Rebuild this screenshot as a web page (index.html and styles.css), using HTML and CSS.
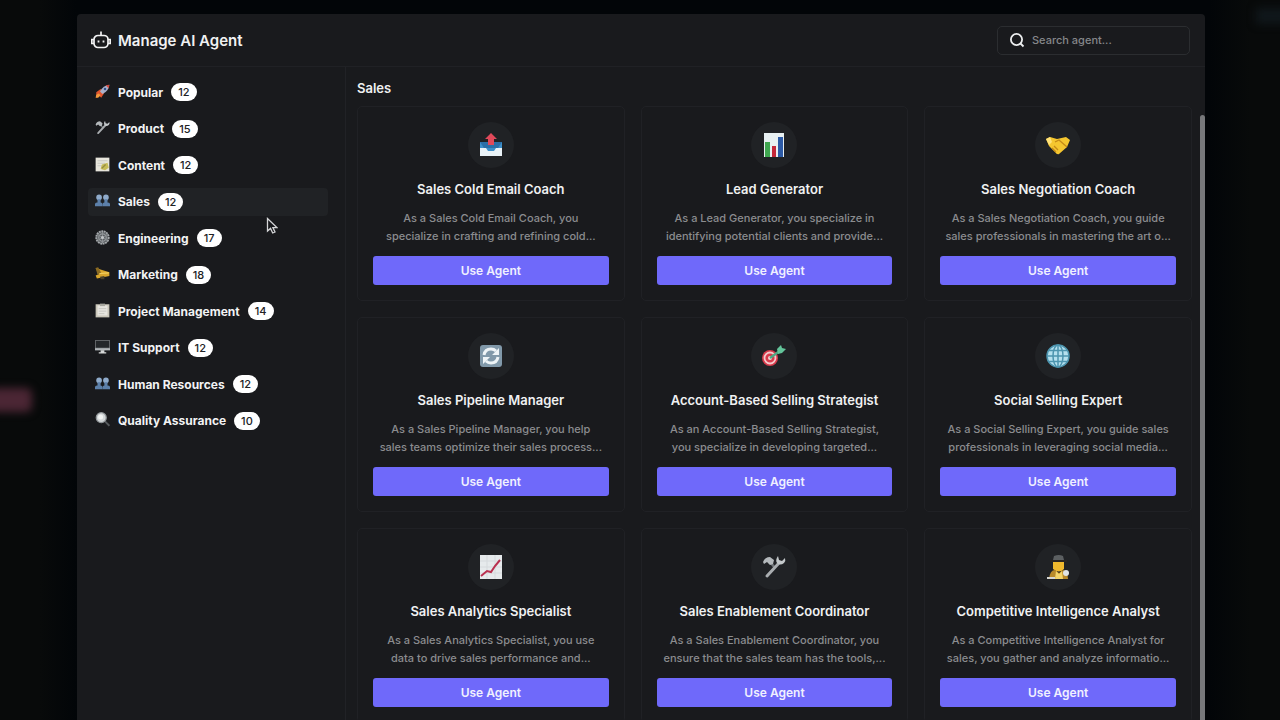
FILE: index.html
```html
<!DOCTYPE html>
<html lang="en">
<head>
  <meta charset="utf-8">
  <meta name="viewport" content="width=device-width, initial-scale=1">
  <title>Manage AI Agent</title>
  <link rel="stylesheet" href="styles.css">
</head>
<body>
  <div class="glow glow-pink"></div>
  <div class="glow glow-blue"></div>

  <!-- shared icons -->
  <svg class="sprite" aria-hidden="true">
    <symbol id="tools" viewBox="0 0 24 24">
      <path d="M9 8l4 5" stroke="#6d7276" stroke-width="2.5"/>
      <path d="M5 21 L17 8" stroke="#a9adb0" stroke-width="3" stroke-linecap="round"/>
      <path d="M16 1 q-3 4-1 7 q3 3 7 0 q2-2 1-5 l-3 3 l-3-1 z" fill="#c3c8ca"/>
      <path d="M1 7 q2-5 7-5 l4 3 l-1 4 l-3 1 l-3-3 l-3 2 z" fill="#b4b9bc"/>
    </symbol>
    <symbol id="people" viewBox="0 0 24 24">
      <circle cx="6.5" cy="7" r="4.5" fill="#8fabcb"/>
      <circle cx="17.5" cy="7" r="4.5" fill="#8fabcb"/>
      <path d="M4 10h5v5q3 0 3 3v3H0v-4q1-2 4-2z" fill="#5c80aa"/>
      <path d="M15 10h5v5q3 0 4 2v4H12v-3q0-3 3-3z" fill="#5c80aa"/>
    </symbol>
  </svg>

  <div class="modal">
    <header class="header">
      <h1 class="title">
        <svg class="bot" viewBox="0 0 20 20" fill="none" stroke="#f2f3f4" stroke-width="1.7">
          <rect x="3" y="5.5" width="14" height="12" rx="4"/>
          <path d="M10 5.5V1.5M3 9.5H.8v4H3M17 9.5h2.2v4H17"/>
          <path d="M6.6 11.5h1.8M11.6 11.5h1.8" stroke-width="2"/>
        </svg>
        Manage AI Agent
      </h1>
      <label class="search">
        <svg viewBox="0 0 16 16" fill="none" stroke="#eceeef" stroke-width="1.8">
          <circle cx="7.5" cy="7.5" r="5.6"/>
          <path d="M11.5 11.5l3 3"/>
        </svg>
        <input type="text" placeholder="Search agent..." aria-label="Search agent">
      </label>
    </header>

    <div class="body">
      <nav class="sidebar">
        <div class="list">
          <a class="item" href="#">
            <svg viewBox="0 0 24 24">
              <path d="M2 13l7-5 6 6-5 8-3-3-5 3z" fill="#e0562f"/>
              <path d="M2 17l4-2 3 3-4 4H1z" fill="#f29a3c"/>
              <path d="M8 12Q13 2 23 1 22 11 12 16z" fill="#a9b0cb"/>
              <path d="M17 2l6-1-1 6z" fill="#cf4b3f"/>
              <circle cx="16" cy="8" r="2" fill="#31518c"/>
            </svg>
            Popular <span class="count">12</span>
          </a>
          <a class="item" href="#">
            <svg><use href="#tools"/></svg>
            Product <span class="count">15</span>
          </a>
          <a class="item" href="#">
            <svg viewBox="0 0 24 24">
              <path d="M1 1h22v22H1z" fill="#e7e5dc"/>
              <path d="M4 6h16M4 10h12M4 14h7" stroke="#c6c6c0" stroke-width="1.5"/>
              <path d="M9 19l2-7 9-3 2 8-6 4z" fill="#c6bc58"/>
              <path d="M11 18l6-6" stroke="#958b45" stroke-width="2"/>
            </svg>
            Content <span class="count">12</span>
          </a>
          <a class="item active" href="#">
            <svg><use href="#people"/></svg>
            Sales <span class="count">12</span>
          </a>
          <a class="item" href="#">
            <svg viewBox="0 0 24 24">
              <circle cx="12" cy="12" r="10" fill="#5a5e61" stroke="#a4a8ab" stroke-width="3" stroke-dasharray="3 1"/>
              <circle cx="12" cy="12" r="6" fill="none" stroke="#969a9d" stroke-width="2"/>
              <path d="M12 3v18M4 7l16 10M4 17L20 7" stroke="#8e9295" stroke-width="1.5"/>
              <circle cx="12" cy="12" r="2.5" fill="#c1c4c6"/>
            </svg>
            Engineering <span class="count">17</span>
          </a>
          <a class="item" href="#">
            <svg viewBox="0 0 24 24">
              <path d="M1 3l22 7v6L3 20l-2-5 5-2z" fill="#d9a62c"/>
              <path d="M1 3l4-1 5 9-6 3z" fill="#8a6a22"/>
              <path d="M7 12l15-1" stroke="#f3d262" stroke-width="2"/>
              <path d="M8 17l7-1v5H9z" fill="#4b412a"/>
            </svg>
            Marketing <span class="count">18</span>
          </a>
          <a class="item" href="#">
            <svg viewBox="0 0 24 24">
              <path d="M1 2h22v21H1z" fill="#c9c6b9"/>
              <path d="M4 4h16v16H4z" fill="#e6e5df"/>
              <path d="M8 1h8v4H8z" fill="#a7a79f"/>
              <path d="M6 9h12M6 13h12M6 17h9" stroke="#c6c6c0" stroke-width="1.5"/>
            </svg>
            Project Management <span class="count">14</span>
          </a>
          <a class="item" href="#">
            <svg viewBox="0 0 24 24">
              <path d="M0 2h24v16H0z" fill="#83878a"/>
              <path d="M1 3h22v11H1z" fill="#24272a"/>
              <path d="M0 15h24v3H0z" fill="#b1b5b8"/>
              <path d="M9 18h6v3h3v2H6v-2h3z" fill="#d5d7d8"/>
            </svg>
            IT Support <span class="count">12</span>
          </a>
          <a class="item" href="#">
            <svg><use href="#people"/></svg>
            Human Resources <span class="count">12</span>
          </a>
          <a class="item" href="#">
            <svg viewBox="0 0 24 24">
              <path d="M16 15l7 7" stroke="#55595c" stroke-width="3"/>
              <circle cx="10" cy="9" r="8" fill="#d3d7d9" stroke="#909598" stroke-width="2"/>
              <circle cx="9" cy="8" r="4" fill="#f0f2f2"/>
            </svg>
            Quality Assurance <span class="count">10</span>
          </a>
        </div>
      </nav>

      <main class="main">
        <h2 class="section-title">Sales</h2>
        <div class="cards">
          <article class="card">
            <div class="avatar">
              <svg viewBox="0 0 24 24">
                <path d="M1 9h22v14H1z" fill="#3d8fc9"/>
                <path d="M1 9h22l-4 6H5z" fill="#2a6fa8"/>
                <path d="M1 15h6l2 3h6l2-3h6v8H1z" fill="#e9f2f7"/>
                <path d="M12 0l6 6h-3v6H9V6H6z" fill="#e0495a"/>
              </svg>
            </div>
            <h3>Sales Cold Email Coach</h3>
            <p>As a Sales Cold Email Coach, you<br>specialize in crafting and refining cold...</p>
            <button>Use Agent</button>
          </article>

          <article class="card">
            <div class="avatar">
              <svg viewBox="0 0 24 24">
                <path d="M2 0h20v24H2z" fill="#e8f0f2"/>
                <path d="M3 9h5v15H3z" fill="#3fa650"/>
                <path d="M10 13h4v11h-4z" fill="#c4283a"/>
                <path d="M16 4h5v20h-5z" fill="#2c5aa6"/>
              </svg>
            </div>
            <h3>Lead Generator</h3>
            <p>As a Lead Generator, you specialize in<br>identifying potential clients and provide...</p>
            <button>Use Agent</button>
          </article>

          <article class="card">
            <div class="avatar">
              <svg viewBox="0 0 24 24">
                <path d="M0 6l4-2 7 2 9-2 4 3-3 7-8 7q-2 1-4-2L3 13z" fill="#f5c62f"/>
                <path d="M9 9l4-2 8 7M8 13l4 4M6 15l4 4" fill="none" stroke="#c58a17" stroke-width="1.3"/>
                <path d="M0 6l4-2 2 5-3 3z" fill="#ffe27a"/>
              </svg>
            </div>
            <h3>Sales Negotiation Coach</h3>
            <p>As a Sales Negotiation Coach, you guide<br>sales professionals in mastering the art o...</p>
            <button>Use Agent</button>
          </article>

          <article class="card">
            <div class="avatar">
              <svg viewBox="0 0 24 24">
                <rect x="1" y="1" width="22" height="22" rx="3" fill="#8199aa"/>
                <path d="M5 11q1-6 7-6 3 0 5 2M19 13q-1 6-7 6-3 0-5-2" fill="none" stroke="#eef4f7" stroke-width="3"/>
                <path d="M20 4v7h-7zM4 20v-7h7z" fill="#eef4f7"/>
              </svg>
            </div>
            <h3>Sales Pipeline Manager</h3>
            <p>As a Sales Pipeline Manager, you help<br>sales teams optimize their sales process...</p>
            <button>Use Agent</button>
          </article>

          <article class="card">
            <div class="avatar">
              <svg viewBox="0 0 24 24">
                <circle cx="8" cy="14" r="8" fill="#d83a4b"/>
                <circle cx="8" cy="14" r="5.5" fill="none" stroke="#f3c9cb" stroke-width="1.8"/>
                <circle cx="8" cy="14" r="2" fill="#f3d4d4"/>
                <path d="M8 14L19 6" stroke="#4ea882" stroke-width="2.4"/>
                <path d="M15 5l4-4 1 3 4 1-4 4-4 1z" fill="#63c49a"/>
              </svg>
            </div>
            <h3>Account-Based Selling Strategist</h3>
            <p>As an Account-Based Selling Strategist,<br>you specialize in developing targeted...</p>
            <button>Use Agent</button>
          </article>

          <article class="card">
            <div class="avatar">
              <svg viewBox="0 0 24 24" fill="none" stroke="#4c94ae" stroke-width="1.5">
                <circle cx="12" cy="12" r="11" fill="#b5e0ee"/>
                <ellipse cx="12" cy="12" rx="5" ry="11"/>
                <path d="M12 1v22M1 12h22M3 6.5h18M3 17.5h18"/>
              </svg>
            </div>
            <h3>Social Selling Expert</h3>
            <p>As a Social Selling Expert, you guide sales<br>professionals in leveraging social media...</p>
            <button>Use Agent</button>
          </article>

          <article class="card">
            <div class="avatar">
              <svg viewBox="0 0 24 24">
                <path d="M1 0h22v24H1z" fill="#e6eaec"/>
                <path d="M1 6h22M1 12h22M1 18h22M8 0v24M16 0v24" stroke="#d6dadd"/>
                <path d="M2 21l6-5 4 1 4-6 5-6" fill="none" stroke="#b9304f" stroke-width="2"/>
              </svg>
            </div>
            <h3>Sales Analytics Specialist</h3>
            <p>As a Sales Analytics Specialist, you use<br>data to drive sales performance and...</p>
            <button>Use Agent</button>
          </article>

          <article class="card">
            <div class="avatar">
              <svg><use href="#tools"/></svg>
            </div>
            <h3>Sales Enablement Coordinator</h3>
            <p>As a Sales Enablement Coordinator, you<br>ensure that the sales team has the tools,...</p>
            <button>Use Agent</button>
          </article>

          <article class="card">
            <div class="avatar">
              <svg viewBox="0 0 24 24">
                <path d="M8 1q5-2 9 0l1 4H7z" fill="#5b5f61"/>
                <path d="M4 5h17v2H4z" fill="#2a2521"/>
                <path d="M7 7h11v7q-5 5-11 0z" fill="#f0b92d"/>
                <path d="M3 24q1-9 6-9l4 3 4-3q5 1 5 9z" fill="#b98a2a"/>
                <path d="M10 16l3 3 3-3 1 8H9z" fill="#f4d56a"/>
                <path d="M1 22h8v2H1z" fill="#d6d6d2"/>
                <circle cx="20" cy="18" r="3" fill="#dfe4e5"/>
              </svg>
            </div>
            <h3>Competitive Intelligence Analyst</h3>
            <p>As a Competitive Intelligence Analyst for<br>sales, you gather and analyze informatio...</p>
            <button>Use Agent</button>
          </article>
        </div>
      </main>
      <div class="scrollbar"></div>
    </div>
  </div>

  <svg class="cursor" viewBox="0 0 12 18">
    <path d="M1.5 1.5v12.5l3-2.6 2.2 4.6 2.3-1-2.1-4.4h4z" fill="#17181b" stroke="#d5d6d8" stroke-width="1.3"/>
  </svg>
</body>
</html>
```
FILE: styles.css
```css
* {
  box-sizing: border-box;
}

body {
  margin: 0;
  height: 100vh;
  overflow: hidden;
  display: flex;
  background: linear-gradient(90deg, #080a0a 0, #080a0a 40px, #020508 76px, #020508 calc(100% - 70px), #080a0a calc(100% - 30px));
  color: #f0f1f2;
  font-family: Inter, "Liberation Sans", sans-serif;
  font-size: 13px;
}

h1, h2, h3, p {
  margin: 0;
}

.sprite {
  position: absolute;
  width: 0;
  height: 0;
}

/* blurred page behind the modal */
.glow {
  position: absolute;
  filter: blur(4px);
}

.glow-pink {
  left: -10px;
  top: 388px;
  width: 42px;
  height: 24px;
  border-radius: 6px;
  background: #4b2634;
}

.glow-blue {
  right: -10px;
  top: 8px;
  width: 34px;
  height: 16px;
  background: #10171b;
}

.modal {
  flex: 1;
  display: flex;
  flex-direction: column;
  margin: 14px 75px 0 77px;
  background: #191a1d;
  border-radius: 4px 4px 0 0;
  position: relative;
}

.header {
  display: flex;
  align-items: center;
  justify-content: space-between;
  height: 53px;
  padding: 0 15px 0 14px;
  border-bottom: 1px solid #202125;
}

.title {
  display: flex;
  align-items: center;
  gap: 7px;
  font-size: 15px;
  font-weight: 600;
}

.bot {
  width: 20px;
  height: 20px;
}

.search {
  display: flex;
  align-items: center;
  gap: 7px;
  width: 193px;
  height: 29px;
  padding: 0 11px;
  border: 1px solid #2b2d30;
  border-radius: 5px;
}

.search svg {
  flex: none;
  width: 16px;
  height: 16px;
}

.search input {
  flex: 1;
  min-width: 0;
  padding: 0;
  border: 0;
  outline: 0;
  background: none;
  color: #f0f1f2;
  font: inherit;
  font-size: 11px;
  font-weight: 500;
}

.search input::placeholder {
  color: #85878a;
}

.body {
  flex: 1;
  display: flex;
  min-height: 0;
}

.sidebar {
  flex: none;
  width: 269px;
  padding: 11px 17px 0 11px;
  border-right: 1px solid #212226;
}

.list {
  display: flex;
  flex-direction: column;
  justify-content: space-between;
  height: 357px;
}

.item {
  display: flex;
  align-items: center;
  gap: 8px;
  height: 28px;
  padding: 0 7px;
  border-radius: 4px;
  color: #f2f3f4;
  font-size: 12px;
  font-weight: 700;
  text-decoration: none;
}

.item svg {
  width: 15px;
  height: 15px;
  margin-bottom: 2px;
}

.item.active {
  background: #202225;
}

.count {
  padding: 0 7px;
  border-radius: 9px;
  background: #fff;
  color: #202124;
  font-size: 11px;
  font-weight: 500;
  line-height: 18px;
}

.main {
  flex: 1;
  min-width: 0;
  padding: 11px 8px 16px 11px;
}

.section-title {
  margin-bottom: 8px;
  font-size: 13px;
  font-weight: 600;
  line-height: 20px;
}

.cards {
  display: grid;
  grid-template-columns: repeat(3, 1fr);
  gap: 16px;
}

.card {
  display: flex;
  flex-direction: column;
  align-items: center;
  padding: 15px;
  border: 1px solid #202125;
  border-radius: 5px;
  text-align: center;
}

.avatar {
  display: flex;
  align-items: center;
  justify-content: center;
  width: 46px;
  height: 46px;
  border-radius: 50%;
  background: #202225;
}

.avatar svg {
  width: 24px;
  height: 24px;
}

.card h3 {
  margin-top: 11px;
  font-size: 13px;
  font-weight: 600;
  line-height: 20px;
}

.card p {
  margin: 10px 0 11px;
  color: #8b8c8f;
  font-size: 11px;
  font-weight: 500;
  line-height: 18px;
}

.card button {
  width: 100%;
  height: 29px;
  border: 0;
  border-radius: 3px;
  background: #6f69fa;
  color: #f0f0ff;
  font: inherit;
  font-size: 12px;
  font-weight: 600;
  cursor: pointer;
}

.scrollbar {
  flex: none;
  width: 5px;
  margin-top: 48px;
  border-radius: 3px 3px 0 0;
  background: #77787b;
}

.cursor {
  position: absolute;
  left: 266px;
  top: 217px;
  width: 12px;
  height: 18px;
}
```
